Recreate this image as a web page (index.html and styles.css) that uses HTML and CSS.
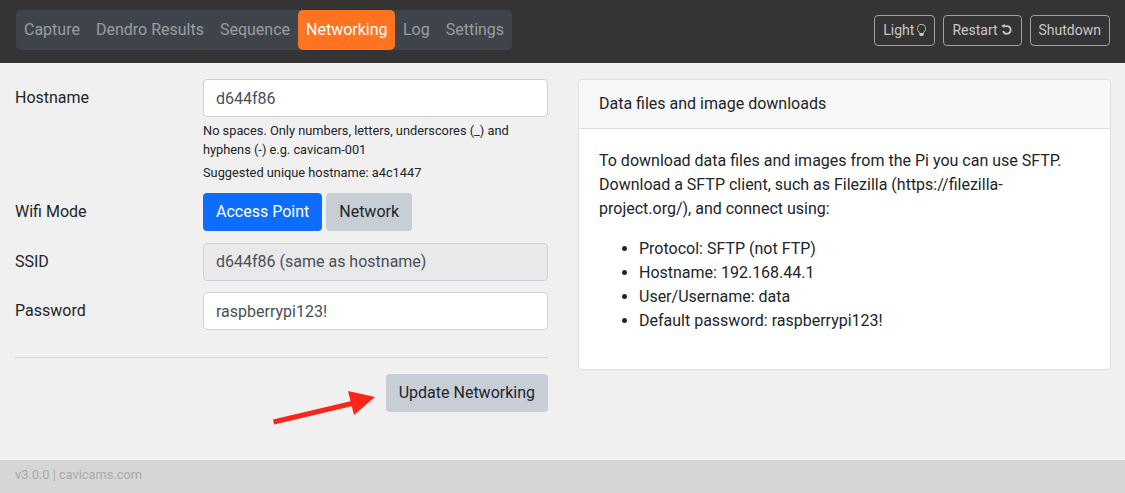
FILE: index.html
```html
<!DOCTYPE html>
<html>
<head>
  <meta charset="utf-8">
  <title>Networking</title>
  <link rel="stylesheet" href="styles.css">
</head>

<body>
  <nav class="topbar">
    <div class="tabs">
      <a class="tab">Capture</a>
      <a class="tab">Dendro Results</a>
      <a class="tab">Sequence</a>
      <a class="tab active">Networking</a>
      <a class="tab">Log</a>
      <a class="tab">Settings</a>
    </div>
    <div class="actions">
      <button class="btn-outline">Light
        <svg class="icon-bulb" viewBox="2 0 12 16" fill="currentColor"><path d="M2 6a6 6 0 1 1 10.174 4.31c-.203.196-.359.4-.453.619l-.762 1.769A.5.5 0 0 1 10.5 13a.5.5 0 0 1 0 1 .5.5 0 0 1 0 1l-.224.447a1 1 0 0 1-.894.553H6.618a1 1 0 0 1-.894-.553L5.5 15a.5.5 0 0 1 0-1 .5.5 0 0 1 0-1 .5.5 0 0 1-.46-.302l-.761-1.77a1.964 1.964 0 0 0-.453-.618A5.984 5.984 0 0 1 2 6zm6-5a5 5 0 0 0-3.479 8.592c.263.254.514.564.676.941L5.83 12h4.342l.632-1.467c.162-.377.413-.687.676-.941A5 5 0 0 0 8 1z"/></svg>
      </button>
      <button class="btn-outline">Restart
        <svg class="icon-restart" viewBox="0 0 12 12"><path d="M3.4 2.2H6.3A4.2 4.2 0 1 1 2.3 7.6" fill="none" stroke="currentColor" stroke-width="1.9"/><path d="M0 2.2L3.9 0V4.4Z" fill="currentColor"/></svg>
      </button>
      <button class="btn-outline">Shutdown</button>
    </div>
  </nav>

  <main class="content">
    <form class="settings">
      <div class="row row-host">
        <label>Hostname</label>
        <div class="field">
          <input class="input" type="text" value="d644f86">
          <div class="help">No spaces. Only numbers, letters, underscores (_) and hyphens (-) e.g. cavicam-001</div>
          <div class="help suggested">Suggested unique hostname: a4c1447</div>
        </div>
      </div>
      <div class="row">
        <label>Wifi Mode</label>
        <div class="field toggle">
          <button type="button" class="btn btn-primary">Access Point</button>
          <button type="button" class="btn btn-grey">Network</button>
        </div>
      </div>
      <div class="row">
        <label>SSID</label>
        <div class="field">
          <input class="input" type="text" value="d644f86 (same as hostname)" disabled>
        </div>
      </div>
      <div class="row">
        <label>Password</label>
        <div class="field">
          <input class="input" type="text" value="raspberrypi123!">
        </div>
      </div>
      <hr>
      <div class="submit">
        <svg class="arrow" viewBox="0 0 104 50" width="104" height="50">
          <path d="M0.6 43L79 24.5" stroke="#fa2619" stroke-width="5" fill="none"/>
          <path d="M75 12L102 18L81 36Z" fill="#fa2619"/>
        </svg>
        <button type="button" class="btn btn-grey">Update Networking</button>
      </div>
    </form>

    <section class="card">
      <div class="card-header">Data files and image downloads</div>
      <div class="card-body">
        <p>To download data files and images from the Pi you can use SFTP. Download a SFTP client, such as Filezilla (https://filezilla-project.org/), and connect using:</p>
        <ul>
          <li>Protocol: SFTP (not FTP)</li>
          <li>Hostname: 192.168.44.1</li>
          <li>User/Username: data</li>
          <li>Default password: raspberrypi123!</li>
        </ul>
      </div>
    </section>
  </main>

  <footer class="footer">v3.0.0 | cavicams.com</footer>
</body>

</html>
```

FILE: styles.css
```css
* {
  box-sizing: border-box;
}

html, body {
  height: 100%;
}

body {
  margin: 0;
  display: flex;
  flex-direction: column;
  background: #f0f0f0;
  color: #212529;
  font-family: Roboto, "Liberation Sans", sans-serif;
  font-size: 16px;
  line-height: 24px;
}

.topbar {
  height: 63px;
  padding: 10px 15px 13px 16px;
  display: flex;
  justify-content: space-between;
  align-items: flex-start;
  background: #343434;
}

.tabs {
  display: flex;
  height: 40px;
  background: #3f444c;
  border-radius: 5px;
}

.tab {
  padding: 8px;
  color: #9a9da1;
}

.tab.active {
  padding-right: 7.4px;
  background: #ff7321;
  color: #fff;
  border-radius: 5px;
}

.actions {
  display: flex;
  gap: 8px;
  margin-top: 5px;
}

.btn-outline {
  height: 31px;
  padding: 0 8px 2px;
  display: flex;
  align-items: center;
  gap: 3px;
  background: transparent;
  border: 1px solid #a0a0a0;
  border-radius: 4px;
  color: #c8c8c8;
  font: inherit;
  font-size: 14px;
}

.icon-bulb {
  width: 9px;
  height: 12px;
}

.icon-restart {
  width: 11px;
  height: 11px;
  margin-right: 1px;
}

.content {
  flex: 1;
  padding: 16px 14px 0 15px;
  display: flex;
  gap: 30px;
  align-items: flex-start;
}

.settings {
  width: 533px;
}

.card {
  width: 533px;
  height: 291px;
  background: #fff;
  border: 1px solid #dfdfdf;
  border-radius: 4px;
}

.card-header {
  height: 49px;
  padding: 12px 20px;
  background: #f7f7f7;
  border-bottom: 1px solid #dfdfdf;
  border-radius: 4px 4px 0 0;
}

.card-body {
  padding: 20px;
}

.card-body p {
  margin: 0 0 16px;
}

.card-body ul {
  margin: 0;
  padding-left: 40px;
}

.row {
  display: flex;
  margin-bottom: 11.5px;
}

.row-host {
  margin-bottom: 10.8px;
}

.row label {
  width: 188px;
  padding-top: 7px;
}

.field {
  flex: 1;
}

.toggle {
  display: flex;
  gap: 4px;
}

.input {
  display: block;
  width: 100%;
  height: 38px;
  padding: 6px 12px;
  background: #fff;
  border: 1px solid #ced4da;
  border-radius: 4px;
  color: #495057;
  font: inherit;
}

.input:disabled {
  background: #e9e9e9;
}

.help {
  margin-top: 4px;
  font-size: 12.8px;
  line-height: 19.2px;
}

.help.suggested {
  margin-top: 3.6px;
}

.btn {
  height: 38px;
  padding: 6px 13px;
  border: 0;
  border-radius: 4px;
  font: inherit;
}

.btn-primary {
  background: #0d6efd;
  color: #fff;
}

.btn-grey {
  background: #c8ced6;
  color: #212529;
}

hr {
  margin: 27px 0 16px;
  border: 0;
  border-top: 1px solid #d8d8d8;
}

.submit {
  display: flex;
  justify-content: flex-end;
  position: relative;
}

.arrow {
  position: absolute;
  left: 258px;
  top: 5px;
}

.footer {
  height: 33px;
  padding: 3px 15px;
  background: #d6d6d6;
  color: #aaa;
  font-size: 12.8px;
}
```
